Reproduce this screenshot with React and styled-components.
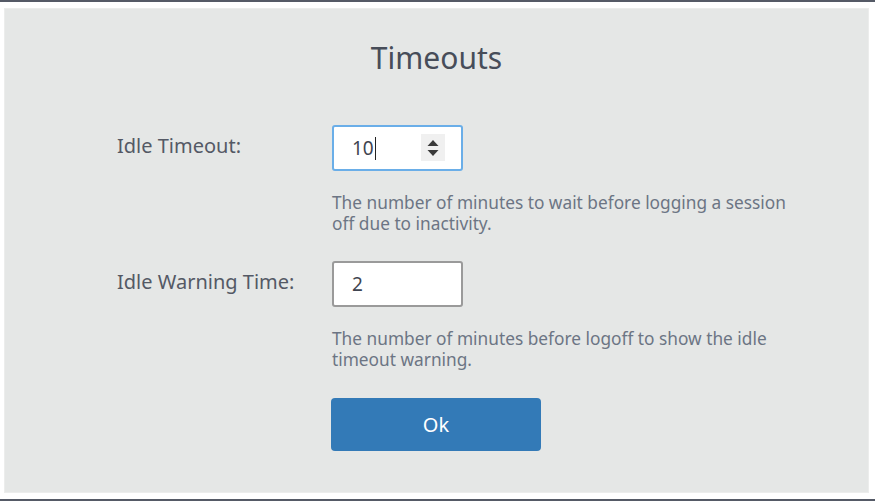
import React from "react";
import styled, { createGlobalStyle } from "styled-components";

const Global = createGlobalStyle`
  html, body { margin: 0; padding: 0; background: #fff; }
  body { font-family: "Noto Sans", "Open Sans", sans-serif; }
`;

const Page = styled.div`
  height: 501px;
  border-top: 2px solid #555a66;
  border-bottom: 2px solid #555a66;
  box-sizing: border-box;
  padding: 6px 6px 6px 4px;
  display: flex;
`;

const Panel = styled.div`
  flex: 1;
  background: #e5e7e6;
  border: 1px solid #ecedec;
  box-sizing: border-box;
  display: flex;
  flex-direction: column;
  padding: 28px 0 0 112px;
`;

const Title = styled.h1`
  margin: 0 0 46px -112px;
  text-align: center;
  font-weight: 400;
  font-size: 30px;
  line-height: 42px;
  color: #474d59;
`;

const Row = styled.div`
  display: grid;
  grid-template-columns: 215px 1fr;
  margin-bottom: ${(p) => p.$mb}px;
`;

const Label = styled.label`
  font-size: 20px;
  color: #545965;
  line-height: 26px;
  padding-top: 8px;
`;

const Field = styled.div`
  display: flex;
  flex-direction: column;
`;

const InputBox = styled.div`
  position: relative;
  width: 131px;
  height: 46px;
  flex: none;
  box-sizing: border-box;
  background: #fff;
  border: 2px solid ${(p) => (p.$focus ? "#6aaee8" : "#9a9a9a")};
  border-radius: 3px;
  display: flex;
  align-items: center;
  padding-left: 18px;
  font-size: 19px;
  color: #3f4450;
  margin-bottom: 21px;
`;

const Caret = styled.span`
  display: inline-block;
  width: 1px;
  height: 23px;
  background: #222;
  margin-left: 1px;
`;

const Spinner = styled.span`
  position: absolute;
  right: 16px;
  top: 7px;
  width: 24px;
  height: 27px;
  background: #f0f0f0;
  display: flex;
  align-items: center;
  justify-content: center;
`;

const Help = styled.p`
  margin: 0;
  font-size: 17.3px;
  line-height: 21px;
  color: #6c7584;
  max-width: 475px;
`;

const Button = styled.button`
  width: 210px;
  height: 53px;
  background: #337ab7;
  border: none;
  border-radius: 4px;
  color: #fff;
  font-family: inherit;
  font-size: 20px;
  margin-left: 214px;
  padding: 0;
`;

export default function App() {
  return (
    <>
      <Global />
      <Page>
        <Panel>
          <Title>Timeouts</Title>
          <Row $mb={27}>
            <Label>Idle Timeout:</Label>
            <Field>
              <InputBox $focus>
                10<Caret />
                <Spinner>
                  <svg width="12" height="18" viewBox="0 0 12 18">
                    <path d="M6 1 L11.5 7 L0.5 7 Z" fill="#3a3a3a" />
                    <path d="M6 17 L11.5 11 L0.5 11 Z" fill="#3a3a3a" />
                  </svg>
                </Spinner>
              </InputBox>
              <Help>
                The number of minutes to wait before logging a session off due
                to inactivity.
              </Help>
            </Field>
          </Row>
          <Row $mb={28}>
            <Label>Idle Warning Time:</Label>
            <Field>
              <InputBox>2</InputBox>
              <Help>
                The number of minutes before logoff to show the idle timeout
                warning.
              </Help>
            </Field>
          </Row>
          <Button>Ok</Button>
        </Panel>
      </Page>
    </>
  );
}
